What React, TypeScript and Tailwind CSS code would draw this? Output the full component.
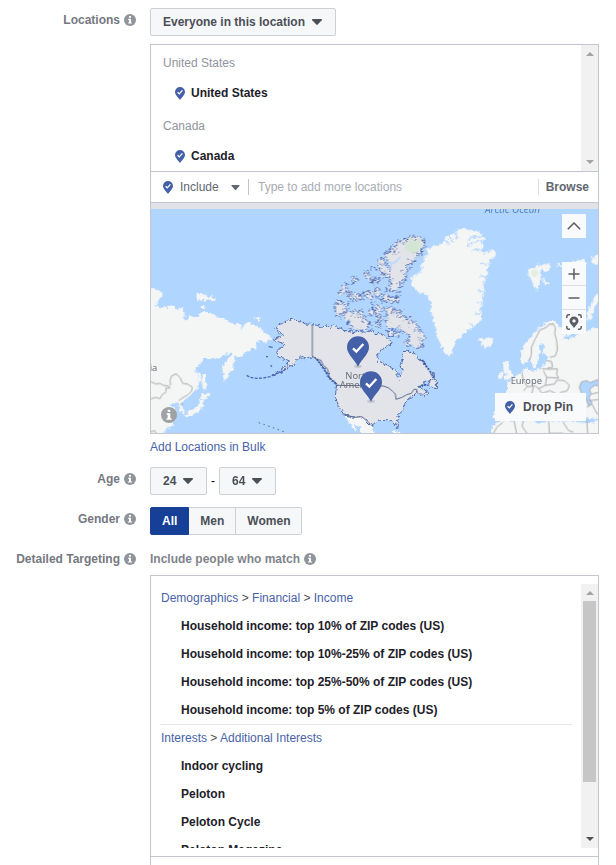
import { useState, type ReactNode } from 'react';
import clsx from 'clsx';

const PLACES = [
  { country: 'United States', name: 'United States' },
  { country: 'Canada', name: 'Canada' },
];

const TARGETING = [
  {
    path: ['Demographics', 'Financial', 'Income'],
    items: [
      'Household income: top 10% of ZIP codes (US)',
      'Household income: top 10%-25% of ZIP codes (US)',
      'Household income: top 25%-50% of ZIP codes (US)',
      'Household income: top 5% of ZIP codes (US)',
    ],
  },
  {
    path: ['Interests', 'Additional Interests'],
    items: ['Indoor cycling', 'Peloton', 'Peloton Cycle', 'Peloton Magazine'],
  },
];

const GENDERS = ['All', 'Men', 'Women'];

function InfoIcon({ className = 'size-3 text-[#90949c]' }: { className?: string }) {
  return (
    <svg viewBox="0 0 12 12" className={clsx('shrink-0', className)} aria-hidden="true">
      <circle cx="6" cy="6" r="6" fill="currentColor" />
      <path d="M5 2h2v1.7H5zM4.2 4.7H7v3.7h.9v1.2H4.1V8.4H5V5.9h-.8z" fill="#fff" />
    </svg>
  );
}

function PinIcon() {
  return (
    <svg viewBox="0 0 10 13" className="h-[13px] w-2.5 shrink-0" aria-hidden="true">
      <path d="M5 0a5 5 0 0 1 5 5c0 2.6-2.6 4.6-5 8C2.6 9.6 0 7.6 0 5a5 5 0 0 1 5-5z" fill="#4460a8" />
      <path d="M2.6 5.2l1.7 1.7 3.1-3.500" fill="none" stroke="#fff" strokeWidth="1.3" />
    </svg>
  );
}

function Caret({ className }: { className?: string }) {
  return (
    <svg viewBox="0 0 10 6" className={clsx('pointer-events-none', className)} aria-hidden="true">
      <path d="M.6 0h8.800q.9.300.3 1.200L5.700 5.600q-.7.700-1.400 0L.3 1.200Q-.3.300.6 0z" fill="currentColor" />
    </svg>
  );
}

function Dropdown({ id, label, options }: { id: string; label?: string; options: string[] }) {
  return (
    <div className="relative inline-block">
      <select
        id={id}
        aria-label={label}
        className="block h-7 appearance-none rounded-xs border border-[#ced0d4] bg-[#f6f7f9] pr-[29px] pl-3 font-bold text-[#4b4f56]"
      >
        {options.map((option) => (
          <option key={option}>{option}</option>
        ))}
      </select>
      <Caret className="absolute top-[11px] right-3.5 h-1.5 w-2.5 text-[#4b4f56]" />
    </div>
  );
}

function Row({ label, htmlFor, children }: { label: string; htmlFor?: string; children: ReactNode }) {
  return (
    <div className="flex gap-3.5">
      <div className="flex h-6 w-34 shrink-0 items-center justify-end gap-1 font-bold text-[#75787f]">
        <label htmlFor={htmlFor}>{label}</label>
        <InfoIcon />
      </div>
      <div className="min-w-0 flex-1">{children}</div>
    </div>
  );
}

function ScrollArrow({ down, className }: { down?: boolean; className: string }) {
  return (
    <svg viewBox="0 0 8 4" className={clsx('h-1 w-2', className)} aria-hidden="true">
      <path d={down ? 'M0 0h8L4 4z' : 'M0 4h8L4 0z'} fill="currentColor" />
    </svg>
  );
}

function MapPin({ x, y }: { x: number; y: number }) {
  return (
    <g transform={`translate(${x} ${y})`}>
      <ellipse cx="0" cy="57" rx="12" ry="5" fill="#c3c6ce" />
      <path d="M0-33A33 33 0 0 1 33 0C33 20 14 32 0 58C-14 32-33 20-33 0A33 33 0 0 1 0-33z" fill="#4460a8" />
      <path d="M-15 3L-5 13L16-10" fill="none" stroke="#fff" strokeWidth="7" />
    </g>
  );
}

function WorldMap() {
  return (
    <svg
      viewBox="0 0 1341 672"
      preserveAspectRatio="xMidYMid slice"
      className="block h-full w-full bg-[#b0d5ff]"
      role="img"
      aria-label="Map of selected locations"
    >
      <defs>
        {/* roughens the coast lines */}
        <filter id="coast" x="-5%" y="-5%" width="110%" height="110%" colorInterpolationFilters="sRGB">
          <feTurbulence type="fractalNoise" baseFrequency="0.09" numOctaves="3" seed="4" />
          <feDisplacementMap in="SourceGraphic" scale="18" xChannelSelector="R" yChannelSelector="G" />
        </filter>
        <filter id="fjords" x="-5%" y="-5%" width="110%" height="110%" colorInterpolationFilters="sRGB">
          <feTurbulence type="fractalNoise" baseFrequency="0.11" numOctaves="3" seed="9" />
          <feDisplacementMap in="SourceGraphic" scale="30" xChannelSelector="R" yChannelSelector="G" />
        </filter>
      </defs>

      <g filter="url(#coast)">
        {/* Asia */}
        <g transform="translate(-3 -15)" fill="#f4f5f5">
          <path d="M-20 255L12 252L22 258L30 262L38 268L36 280L28 284L20 300L12 306L22 306L38 310L62 308L66 302L76 316L96 312L104 324L100 346L110 352L118 336L146 340L150 326L166 322L182 330L196 330L200 342L226 342L234 352L256 360L274 362L278 372L286 358L300 358L318 364L330 374L344 384L364 398L362 406L350 412L346 420L338 414L330 412L316 416L320 432L300 438L282 448L272 456L252 458L254 470L248 480L252 492L240 506L236 516L226 534L218 520L216 492L222 478L236 462L248 450L242 444L232 452L220 450L212 462L192 466L164 464L148 480L134 500L140 506L150 512L150 530L142 548L130 566L118 578L104 584L96 598L98 612L104 626L96 630L88 612L82 598L74 600L66 596L60 606L72 612L80 622L70 634L72 654L60 668L44 680L30 710L-20 710Z" />
          <path d="M158 508L166 508L166 530L172 552L162 562L154 530ZM152 570L158 564L170 570L186 566L172 580L160 586L154 582ZM148 586L162 586L162 604L152 620L136 628L122 634L108 644L104 632L124 618L138 610L148 598Z" />
          <path d="M138 270L150 266L158 272L168 268L172 278L184 280L196 288L190 292L176 286L160 290L142 288ZM150 306L164 306L166 314L154 314ZM314 344L322 338L332 342L328 348L316 348Z" />
        </g>

        {/* Mexico and Cuba */}
        <g transform="translate(357 303)" fill="#f4f5f5">
          <path d="M222 314L240 318L290 322L308 350L314 386L280 386L268 352L250 342L262 362L256 364L240 340Z" />
          <path d="M362 368L376 364L402 372L402 378L370 374Z" />
        </g>

        {/* Mainland United States and Canada */}
        <g transform="translate(357 303)" fill="#e2e4ea" stroke="#5069ae" strokeWidth="3">
          <path d="M127 44L110 42L98 36L84 34L74 28L64 24L56 30L48 32L38 40L26 44L18 56L26 64L36 72L40 80L28 82L12 88L20 96L38 98L44 104L34 112L22 124L22 138L34 146L46 148L58 152L54 164L44 172L30 182L6 196L30 188L52 174L70 164L80 152L92 140L104 146L126 140L140 148L152 164L166 178L174 196L184 210L200 222L198 240L196 262L204 284L212 300L222 314L236 318L256 322L276 320L290 332L302 344L308 350L316 336L330 332L352 332L364 332L374 340L382 356L386 346L382 328L388 312L404 296L404 284L412 272L424 262L436 252L440 244L454 258L472 246L462 238L450 238L452 228L470 214L488 212L494 206L484 184L470 170L460 154L446 150L436 132L420 124L408 124L398 132L400 148L392 160L396 180L388 208L382 202L380 182L360 172L344 164L326 152L322 140L332 120L352 108L366 98L362 92L350 82L342 76L330 70L318 74L308 60L296 66L286 70L272 62L256 68L240 62L222 62L204 52L188 44L180 52L168 44L156 52L140 46Z" />
          <path d="M474 218L490 208L502 216L502 236L488 234ZM352 62L368 60L370 80L356 78ZM454 252L472 242L478 248L462 260Z" />
        </g>

        {/* Greenland, Iceland and Svalbard */}
        <g transform="translate(867 -15)" fill="#f4f5f5">
          <path d="M30 92L44 84L58 78L72 74L90 78L108 80L128 92L134 106L124 118L134 126L126 140L136 150L150 136L166 142L168 154L152 166L146 180L142 200L138 220L130 240L134 260L126 280L130 300L118 310L124 330L126 348L112 356L98 370L80 382L66 392L56 404L44 416L38 440L28 462L16 448L6 428L-6 400L-14 376L-20 350L-26 320L-30 290L-40 272L-64 266L-80 250L-88 228L-82 214L-60 208L-54 196L-60 184L-46 172L-48 160L-36 148L-40 136L-26 128L-10 124L4 118L16 104Z" />
          <path d="M12 100L28 124M26 94L42 118M44 86L52 104M134 98L108 96L84 108M134 112L112 112L80 126M126 140L112 136L98 140M142 180L122 178M138 220L118 216M132 262L114 260M130 300L110 294M122 330L104 330M100 366L88 358" fill="none" stroke="#b0d5ff" strokeWidth="4" />
          <path d="M116 404L124 400L132 406L144 400L158 404L162 414L150 424L136 430L122 424L126 414Z" />
          <path d="M264 196L284 190L298 182L306 192L300 206L306 222L298 240L288 260L278 236L266 222ZM300 184L318 178L334 186L326 200L308 200ZM308 218L326 240L314 246ZM352 180L362 180L362 186L352 186ZM386 178L404 170L436 166L436 184L392 186ZM452 156L462 158L476 148L490 166L464 184L456 176Z" />
          <path d="M484 268L474 290L464 312L454 344L442 350L440 326L452 300L466 276Z" />
        </g>

        {/* Europe and North Africa */}
        <g transform="translate(867 -15)" fill="#f4f5f5">
          <path d="M242 450L250 424L262 412L270 398L284 386L296 372L312 358L330 352L346 352L358 368L380 374L398 384L390 396L372 392L370 400L380 408L392 404L410 392L430 386L460 372L504 376L504 642L160 642L170 600L198 568L204 548L200 536L212 530L226 516L240 506L254 500L258 486L262 498L274 500L290 500L306 490L310 480L318 466L330 458L312 452L308 440L314 424L306 418L296 428L300 444L294 466L288 488L278 490L276 474L268 462L262 474L252 478L240 468Z" />
          <path d="M190 474L206 474L206 492L218 508L216 522L194 528L200 510L190 496ZM174 508L188 502L190 518L176 526Z" />
          <path d="M144 710L158 664L176 652L250 648L300 656L330 650L440 656L504 650L504 710Z" />
        </g>
      </g>

      {/* Canadian Arctic islands */}
      <g filter="url(#fjords)">
        <g transform="translate(357 -15)" fill="#e2e4ea" stroke="#5069ae" strokeWidth="3">
          <path d="M352 170L344 156L350 144L366 142L362 130L376 128L380 116L392 112L396 102L412 104L424 98L440 100L458 104L466 116L462 130L450 146L436 164L428 180L414 188L410 208L404 222L400 236L388 228L392 248L380 262L364 258L352 262L356 246L366 240L358 226L362 206L358 190Z" />
          <path d="M322 168L334 160L344 176L350 188L362 210L354 222L340 216L334 202L324 192Z" />
          <path d="M332 278L346 272L364 280L384 276L388 288L372 294L348 292L334 290Z" />
          <path d="M348 310L360 306L366 318L376 314L380 326L392 320L400 334L418 344L436 356L446 374L462 390L464 404L456 410L462 428L448 424L444 436L430 428L414 424L402 416L410 408L420 404L416 392L400 386L390 376L372 374L356 374L346 362L350 340Z" />
          <path d="M228 322L246 318L258 326L274 318L282 330L272 338L292 344L300 364L284 366L296 374L290 384L270 378L250 374L232 364L238 352L222 344Z" />
          <path d="M196 296L212 292L232 300L226 318L214 336L200 338L196 318Z" />
          <path d="M232 272L246 262L256 270L272 276L270 288L252 290L240 286ZM206 266L216 252L230 240L236 252L226 264L214 272Z" />
          <path d="M246 226L260 216L262 226L250 240ZM282 204L296 206L300 220L308 234L292 228ZM310 222L324 226L322 238L312 234ZM282 264L294 260L300 270L308 260L314 278L300 286L290 280ZM314 252L326 254L330 268L322 284L316 272Z" />
          <path d="M294 320L308 312L316 322L308 336L298 332ZM322 304L338 300L330 322L332 344L322 350L318 326ZM320 352L332 350L334 366L322 368ZM376 380L392 384L390 398L378 394Z" />
          <path d="M304 184L308 194M278 268L284 276M274 290L280 282M300 296L312 298M386 240L394 244" />
          {/* inlets */}
          <path
            d="M362 140L376 152M376 126L388 142M396 108L402 124M418 102L424 116M452 148L434 146M432 172L416 166M410 204L394 200M356 228L372 226M330 172L338 184M338 210L348 204M366 314L372 334M384 322L388 342M404 336L400 352M424 350L414 366M440 372L426 384M456 404L436 400M350 346L362 350M246 322L250 338M266 326L266 344M284 346L274 358M240 268L250 278M218 254L224 262"
            fill="none"
            strokeWidth="2"
          />
        </g>
        {/* park in the far north */}
        <path d="M766 96L786 90L808 94L814 106L802 122L790 132L766 128L762 112Z" fill="#d3e5d3" />
      </g>

      {/* Svalbard reserve */}
      <path d="M1140 186L1156 180L1162 196L1152 204L1142 200Z" fill="#e2efdf" />
      <path d="M706 154q14 14 28 4l14-14M722 166l-8 14" fill="none" stroke="#b0d5ff" strokeWidth="4" />

      {/* country borders */}
      <g fill="none" stroke="#a9a9ad" strokeWidth="3" strokeLinejoin="round">
        <path
          transform="translate(-3 -15)"
          d="M0 586L16 580L30 584L36 572L48 564L48 552L60 552L56 546L40 544L30 538L18 540L0 532M62 544L60 530L64 516L78 510L90 520L98 538L112 540L128 550L124 562L114 572L100 580L86 590M90 602L100 600M0 684L14 680L20 690"
        />
        <g transform="translate(867 -15)">
          <path d="M418 550L424 534L440 530L450 536L470 528L484 530L484 546L464 544L448 556L454 570L446 580L456 596L446 606L436 580L424 566Z" fill="#b0d5ff" />
          <path d="M268 470L274 452L274 430L286 404L300 378L320 370L326 362L340 360L346 372L344 388L350 410L352 436L346 456L330 460M318 470L334 472L338 490L322 492M306 494L330 496L352 494L350 512L356 522L320 520L310 500M246 506L250 530L262 548L250 560M262 548L286 546L296 554L316 544L320 520M296 554L306 568L330 560L350 570M316 544L344 540L350 528L374 530L388 544L382 560L360 566M280 548L276 568M454 570L482 564M446 590L482 586M440 610L456 600L470 628L482 634M440 648L444 700M326 650L328 688L370 688M250 652L246 666L262 690M188 656L172 668L160 688M222 650L230 690M370 656L386 680L400 684" />
        </g>
      </g>

      {/* state lines */}
      <g transform="translate(357 303)" fill="none" stroke="#5f6b8c" strokeWidth="3">
        <path d="M127 44L127 138L142 150L152 150L160 166L172 176L176 188" />
        <path d="M198 226L340 228L356 234L368 244L376 252L378 268L396 262L410 254L424 250L432 238L440 238L442 250" />
        <path d="M222 314L236 318L256 322L276 320L290 332L302 344L310 350" />
      </g>
      <g transform="translate(357 303)" fill="none" stroke="#35549f" strokeWidth="5" strokeDasharray="7 3">
        <path d="M140 146L154 166L166 184L176 200L192 216L202 226" />
        <path d="M456 150L468 168L480 184L492 204M444 232L460 224L476 226" />
      </g>

      {/* Aleutians and Hawaii */}
      <g transform="translate(-3 -15)" fill="none" stroke="#4e6ab0">
        <path d="M290 514L300 520L320 523L340 522L360 518L376 510L390 506L410 494" strokeWidth="4" strokeDasharray="9 4" />
        <path d="M356 428L368 430M348 458L354 458M362 484L366 488" strokeWidth="4" />
        <path d="M326 656L344 662L366 670L388 678L408 686" strokeWidth="3" strokeDasharray="5 10" />
      </g>

      <g className="font-['Noto_Sans']" fontSize="28" fill="#6b6f78">
        <text x="-4" y="486">ia</text>
        <text x="1079" y="524">Europe</text>
        <text x="583" y="510">North</text>
        <text x="566" y="536">America</text>
        <text x="1002" y="13" fontSize="30" fontStyle="italic" fill="#5d86bb">Arctic Ocean</text>
      </g>

      <MapPin x={621} y={415} />
      <MapPin x={660} y={520} />
    </svg>
  );
}

function MapPanel() {
  const button = 'flex size-6 items-center justify-center bg-[#f9fafb] text-[#5a5d64]';
  return (
    <div className="relative h-56 overflow-hidden">
      <WorldMap />
      <button className={clsx(button, 'absolute top-[5px] right-3')} aria-label="Collapse map">
        <svg viewBox="0 0 14 8" className="h-2 w-3.5" fill="none" stroke="currentColor" strokeWidth="1.5">
          <path d="M.8 7.300L7 1l6.200 6.300" />
        </svg>
      </button>
      <div className="absolute top-[53px] right-3 divide-y divide-[#dcdee3]">
        <button className={button} aria-label="Zoom in">
          <svg viewBox="0 0 12 12" className="size-3" stroke="currentColor" strokeWidth="1.5">
            <path d="M6 .5v11M.5 6h11" />
          </svg>
        </button>
        <button className={button} aria-label="Zoom out">
          <svg viewBox="0 0 12 12" className="size-3" stroke="currentColor" strokeWidth="1.5">
            <path d="M.5 6h11" />
          </svg>
        </button>
        <button className={button} aria-label="Fit to locations">
          <svg viewBox="0 0 16 16" className="size-4" fill="none" stroke="currentColor" strokeWidth="1.5">
            <path d="M.8 4V2.500Q.8.8 2.500.8H4M12 .8h1.500q1.700 0 1.700 1.700V4M15.200 12v1.500q0 1.700-1.700 1.700H12M4 15.200H2.500Q.8 15.200.8 13.500V12" />
            <path
              d="M8 2.500a4.500 4.500 0 0 1 4.500 4.500c0 2.500-2.500 4-4.500 7C6 11 3.500 9.500 3.500 7A4.500 4.500 0 0 1 8 2.500zM8 5.200a1.700 1.700 0 1 0 0 3.400 1.700 1.700 0 0 0 0-3.400z"
              fill="currentColor"
              fillRule="evenodd"
              stroke="none"
            />
          </svg>
        </button>
      </div>
      <button className="absolute right-3 bottom-3 flex h-7 items-center gap-2 bg-[#f9fafb] pr-[13px] pl-2.5 font-bold text-[#4b4f56]">
        <PinIcon />
        Drop Pin
      </button>
      <button className="absolute bottom-2.5 left-2.5" aria-label="About this map">
        <InfoIcon className="size-4 text-[#a0a1a4]" />
      </button>
    </div>
  );
}

function LocationBox() {
  return (
    <div className="mt-2 border border-[#c4c6cf]">
      <div className="flex h-[126px] overflow-hidden">
        <div className="flex-1 space-y-[17px] pt-2.5 pl-3">
          {PLACES.map((place) => (
            <div key={place.country}>
              <div className="text-[#90949c]">{place.country}</div>
              <div className="mt-3.5 flex items-center gap-1.5 pl-3 font-bold text-[#1d2129]">
                <PinIcon />
                {place.name}
              </div>
            </div>
          ))}
        </div>
        <div className="flex w-[17px] flex-col items-center justify-between bg-[#f1f1f1] py-[7px]">
          <ScrollArrow className="text-[#a3a3a3]" />
          <ScrollArrow down className="text-[#a3a3a3]" />
        </div>
      </div>
      <div className="flex h-8 items-center border-y border-[#c4c6cf] pr-[9px] pl-3">
        <PinIcon />
        <div className="relative">
          <select aria-label="Include or exclude" className="block appearance-none pr-[25px] pl-[7px] text-[#616770]">
            <option>Include</option>
            <option>Exclude</option>
          </select>
          <Caret className="absolute top-[6px] right-2 h-[5px] w-[9px] text-[#616770]" />
        </div>
        <input
          type="text"
          aria-label="Add locations"
          placeholder="Type to add more locations"
          className="h-4 min-w-0 flex-1 border-l border-[#c4c6cf] pl-[9px] placeholder:text-[#a9acb3]"
        />
        <button className="border-l border-[#dcdee3] pl-[7px] font-bold text-[#616770]">Browse</button>
      </div>
      <div className="h-1.5 bg-[#e1e2e8]" />
      <MapPanel />
    </div>
  );
}

function TargetingBox() {
  return (
    <div className="mt-1 border-x border-t border-[#c4c6cf]">
      <div className="flex border-b border-[#c4c6cf] py-2">
        <div className="h-66 flex-1 overflow-hidden pr-[9px] pl-2.5">
          {TARGETING.map((group) => (
            <div key={group.path[0]} className="-mb-px border-b border-[#e5e6ea] leading-7">
              <div className="text-[#4b4f56]">
                {group.path.map((part, i) => (
                  <span key={part}>
                    {i > 0 && ' > '}
                    <a href="#" className="text-[#4762a8]">{part}</a>
                  </span>
                ))}
              </div>
              <ul className="pl-5 font-bold text-[#1d2129]">
                {group.items.map((item) => (
                  <li key={item}>{item}</li>
                ))}
              </ul>
            </div>
          ))}
        </div>
        <div className="flex w-[17px] flex-col items-center bg-[#f1f1f1] py-[7px]">
          <ScrollArrow className="text-[#a3a3a3]" />
          <div className="mt-1.5 h-[181px] w-[13px] bg-[#c6c6c6]" />
          <ScrollArrow down className="mt-auto text-[#505050]" />
        </div>
      </div>
      <div className="h-2" />
    </div>
  );
}

export default function App() {
  const [gender, setGender] = useState('All');

  return (
    <main className="space-y-3 bg-white pt-2 pr-[17px] font-['Liberation_Sans',Arial,sans-serif] text-[12px] leading-4">
      <Row label="Locations" htmlFor="scope">
        <Dropdown id="scope" options={['Everyone in this location']} />
        <LocationBox />
        <a href="#" className="mt-[5px] block text-[#4762a8]">Add Locations in Bulk</a>
      </Row>

      <Row label="Age" htmlFor="age-min">
        <div className="flex items-center gap-1">
          <Dropdown id="age-min" options={['24']} />
          <span>-</span>
          <Dropdown id="age-max" label="Maximum age" options={['64']} />
        </div>
      </Row>

      <Row label="Gender">
        <div className="flex" role="group" aria-label="Gender">
          {GENDERS.map((name) => (
            <button
              key={name}
              aria-pressed={gender === name}
              onClick={() => setGender(name)}
              className={clsx(
                'h-7 border-y border-r px-[11px] font-bold first:rounded-l-xs first:border-l last:rounded-r-xs',
                gender === name
                  ? 'border-[#163f97] bg-[#163f97] text-white'
                  : 'border-[#ced0d4] bg-[#f6f7f9] text-[#4b4f56]',
              )}
            >
              {name}
            </button>
          ))}
        </div>
      </Row>

      <Row label="Detailed Targeting">
        <div className="flex h-6 items-center gap-1 font-bold text-[#7f838b]">
          Include people who match
          <InfoIcon />
        </div>
        <TargetingBox />
      </Row>
    </main>
  );
}
